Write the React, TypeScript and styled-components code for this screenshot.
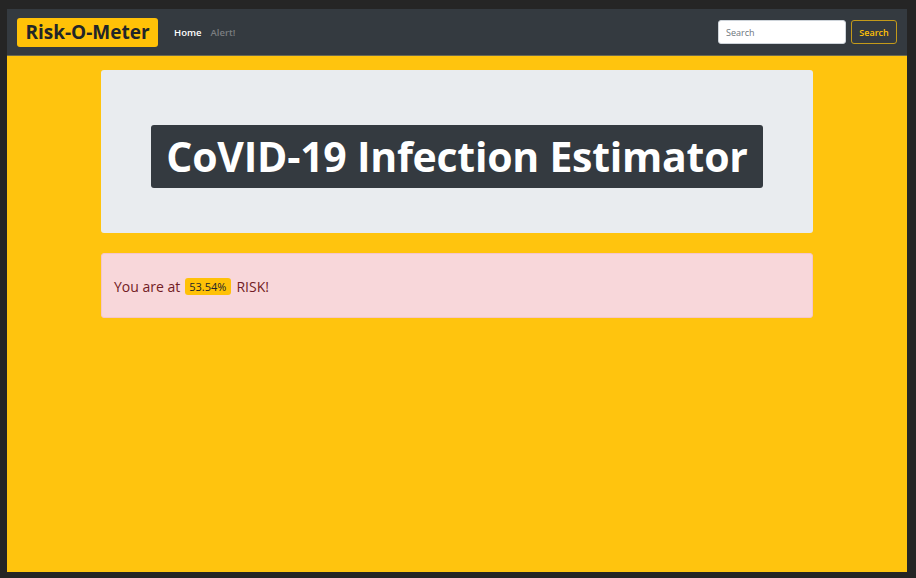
import React from "react";
import styled, { createGlobalStyle } from "styled-components";

const Global = createGlobalStyle`
  html, body { margin: 0; padding: 0; }
  body {
    background: #252525;
    font-family: "Open Sans", "Noto Sans", "Liberation Sans", sans-serif;
    padding: 9px 9px 6px 7px;
    height: 578px;
    box-sizing: border-box;
    overflow: hidden;
  }
  #root { height: 100%; }
`;

const Page = styled.div`
  height: 100%;
  background: #ffc40e;
  display: flex;
  flex-direction: column;
`;

const Navbar = styled.nav`
  height: 47px;
  background: #343a40;
  border-bottom: 1px solid #6d6a4f;
  display: flex;
  align-items: center;
  padding: 0 10px 0 10px;
  box-sizing: border-box;
`;

const Brand = styled.a`
  background: #ffc107;
  color: #212529;
  font-weight: 700;
  font-size: 19px;
  border-radius: 3px;
  padding: 0 8px;
  height: 29px;
  line-height: 29px;
  width: 141px;
  box-sizing: border-box;
  text-align: center;
`;

const NavLinks = styled.div`
  display: flex;
  gap: 9px;
  margin-left: 16px;
`;

const NavLink = styled.a<{ $active?: boolean }>`
  font-size: 9.5px;
  font-weight: 600;
  color: ${(p) => (p.$active ? "#ffffff" : "#7b7e81")};
`;

const SearchForm = styled.form`
  margin-left: auto;
  display: flex;
  gap: 5px;
`;

const SearchInput = styled.input`
  width: 128px;
  height: 24px;
  box-sizing: border-box;
  border: 1px solid #ced4da;
  border-radius: 3px;
  padding: 0 7px;
  font-family: inherit;
  font-size: 9px;
  color: #495057;
  &::placeholder { color: #6c757d; }
  outline: none;
`;

const SearchButton = styled.button`
  height: 24px;
  width: 46px;
  box-sizing: border-box;
  background: transparent;
  border: 1px solid #c39a1a;
  border-radius: 3px;
  color: #ffc107;
  font-family: inherit;
  font-size: 9px;
  font-weight: 600;
  padding: 0;
`;

const Container = styled.main`
  width: 712px;
  margin: 14px auto 0;
  display: flex;
  flex-direction: column;
  gap: 20px;
`;

const Jumbotron = styled.section`
  height: 163px;
  box-sizing: border-box;
  background: #e9ecef;
  border-radius: 3px;
  display: flex;
  align-items: flex-start;
  justify-content: center;
  padding-top: 55px;
`;

const TitleBadge = styled.h1`
  margin: 0;
  background: #343a40;
  color: #ffffff;
  border-radius: 3px;
  font-size: 41px;
  font-weight: 700;
  height: 63px;
  width: 612px;
  box-sizing: border-box;
  display: flex;
  align-items: center;
  justify-content: center;
  letter-spacing: -0.25px;
  padding-bottom: 2px;
`;

const Alert = styled.div`
  height: 65px;
  box-sizing: border-box;
  background: #f8d7da;
  border: 1px solid #f5c6cb;
  border-radius: 3px;
  color: #721c24;
  font-size: 14px;
  display: flex;
  align-items: center;
  padding: 2px 12px 0;
  gap: 4px;
`;

const RiskBadge = styled.span`
  background: #ffc107;
  color: #212529;
  font-size: 11px;
  font-weight: 500;
  border-radius: 3px;
  padding: 2px 5px 2px 4px;
  line-height: 13px;
  margin: 0 1px;
`;

export default function App() {
  return (
    <>
      <Global />
      <Page>
        <Navbar>
          <Brand>Risk-O-Meter</Brand>
          <NavLinks>
            <NavLink $active>Home</NavLink>
            <NavLink>Alert!</NavLink>
          </NavLinks>
          <SearchForm onSubmit={(e) => e.preventDefault()}>
            <SearchInput placeholder="Search" />
            <SearchButton type="submit">Search</SearchButton>
          </SearchForm>
        </Navbar>
        <Container>
          <Jumbotron>
            <TitleBadge>CoVID-19 Infection Estimator</TitleBadge>
          </Jumbotron>
          <Alert>
            <span>You are at</span>
            <RiskBadge>53.54%</RiskBadge>
            <span>RISK!</span>
          </Alert>
        </Container>
      </Page>
    </>
  );
}
